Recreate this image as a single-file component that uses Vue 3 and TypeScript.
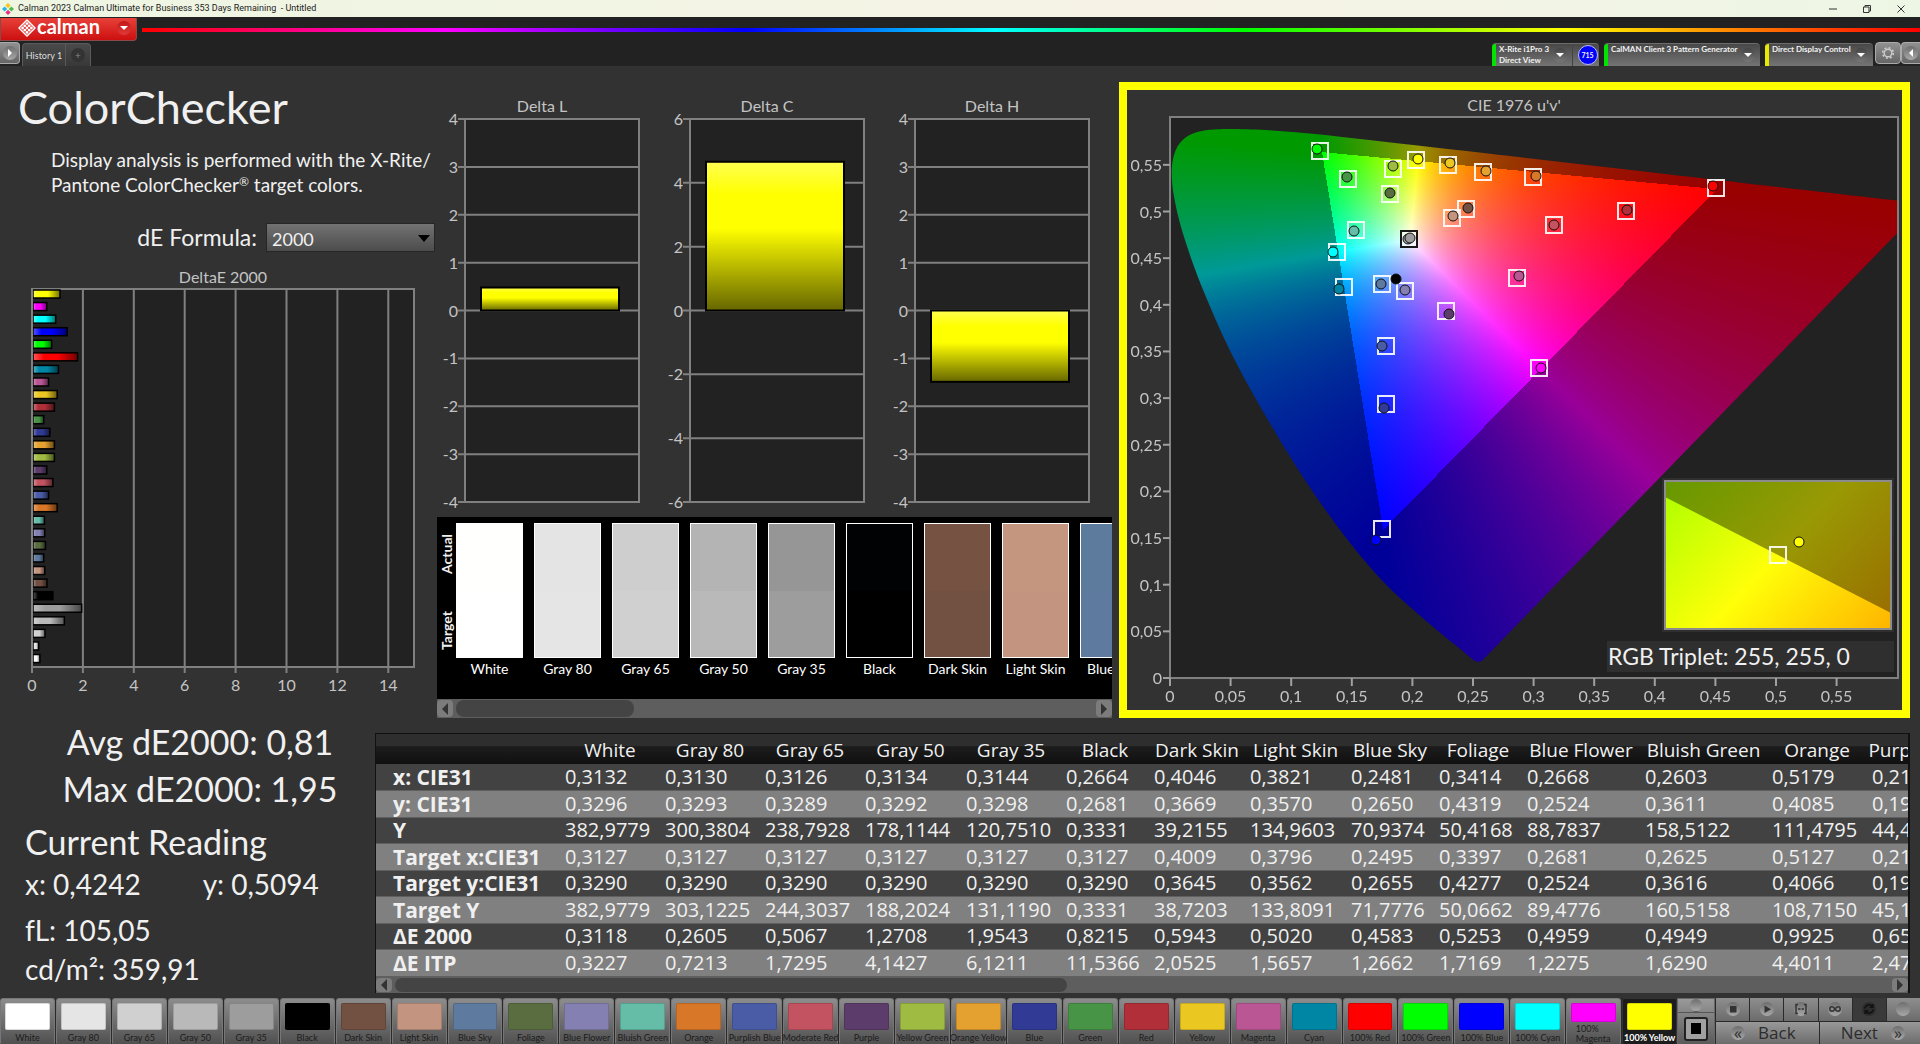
<script setup lang="ts">
import { onMounted, ref } from 'vue'

interface Patch { name: string; color: string; actual?: string; de: number }

const patches: Patch[] = [
  { name: 'White', color: '#ffffff', actual: '#fffffe', de: 0.31 },
  { name: 'Gray 80', color: '#e5e5e5', actual: '#e4e4e4', de: 0.26 },
  { name: 'Gray 65', color: '#d0d0d0', actual: '#cecece', de: 0.51 },
  { name: 'Gray 50', color: '#b9b9b9', actual: '#b4b4b4', de: 1.27 },
  { name: 'Gray 35', color: '#9d9d9d', actual: '#969696', de: 1.95 },
  { name: 'Black', color: '#000000', actual: '#010204', de: 0.82 },
  { name: 'Dark Skin', color: '#735142', actual: '#755241', de: 0.59 },
  { name: 'Light Skin', color: '#c39581', actual: '#c4957f', de: 0.5 },
  { name: 'Blue Sky', color: '#5e7b9f', actual: '#5d7b9d', de: 0.46 },
  { name: 'Foliage', color: '#5a6d41', de: 0.53 },
  { name: 'Blue Flower', color: '#8481b2', de: 0.5 },
  { name: 'Bluish Green', color: '#65bda8', de: 0.49 },
  { name: 'Orange', color: '#d97728', de: 0.99 },
  { name: 'Purplish Blue', color: '#4a5ca6', de: 0.65 },
  { name: 'Moderate Red', color: '#c35360', de: 0.82 },
  { name: 'Purple', color: '#5c3c6b', de: 0.58 },
  { name: 'Yellow Green', color: '#9fbb42', de: 0.88 },
  { name: 'Orange Yellow', color: '#e5a130', de: 0.88 },
  { name: 'Blue', color: '#313b95', de: 0.7 },
  { name: 'Green', color: '#489447', de: 0.46 },
  { name: 'Red', color: '#b02f38', de: 0.88 },
  { name: 'Yellow', color: '#ebc722', de: 0.99 },
  { name: 'Magenta', color: '#bb5695', de: 0.65 },
  { name: 'Cyan', color: '#0086a5', de: 1.04 },
  { name: '100% Red', color: '#ff0000', de: 1.79 },
  { name: '100% Green', color: '#00ff00', de: 0.77 },
  { name: '100% Blue', color: '#0000ff', de: 1.38 },
  { name: '100% Cyan', color: '#00ffff', de: 0.93 },
  { name: '100% Magenta', color: '#ff00ff', de: 0.58 },
  { name: '100% Yellow', color: '#ffff00', de: 1.1 },
]
const selected = '100% Yellow'
const deBars = [...patches].reverse()
const comparison = patches.slice(0, 9)

const deUnit = 25.45
const deTicks = [0, 2, 4, 6, 8, 10, 12, 14]

interface DeltaChart { title: string; max: number; step: number; value: number }
const deltas: DeltaChart[] = [
  { title: 'Delta L', max: 4, step: 1, value: 0.48 },
  { title: 'Delta C', max: 6, step: 2, value: 4.66 },
  { title: 'Delta H', max: 4, step: 1, value: -1.49 },
]
function ticksOf(c: DeltaChart): number[] {
  const out: number[] = []
  for (let v = c.max; v >= -c.max; v -= c.step) out.push(v)
  return out
}
const deltaY = (c: DeltaChart, v: number) => 25 + ((c.max - v) / (2 * c.max)) * 383

// CIE plot, in plot-area pixels
const plotW = 728
const plotH = 561
const uTicks = ['0', '0,05', '0,1', '0,15', '0,2', '0,25', '0,3', '0,35', '0,4', '0,45', '0,5', '0,55']
interface Marker { t?: [number, number]; c: [number, number]; color: string }
const markers: Marker[] = [
  { t: [150, 34], c: [147, 32], color: '#00ff00' },
  { t: [178, 62], c: [177, 60], color: '#489447' },
  { t: [223, 52], c: [223, 49], color: '#9fbb42' },
  { t: [246, 43], c: [248, 42], color: '#ffff00' },
  { t: [278, 48], c: [280, 46], color: '#ebc722' },
  { t: [313, 55], c: [316, 54], color: '#e5a130' },
  { t: [363, 60], c: [366, 59], color: '#d97728' },
  { t: [220, 77], c: [220, 76], color: '#5a6d41' },
  { t: [296, 92], c: [298, 91], color: '#735142' },
  { t: [282, 101], c: [283, 99], color: '#c39581' },
  { t: [186, 113], c: [184, 114], color: '#65bda8' },
  { t: [167, 135], c: [163, 135], color: '#00ffff' },
  { t: [174, 170], c: [169, 172], color: '#0086a5' },
  { t: [212, 167], c: [211, 167], color: '#5e7b9f' },
  { t: [235, 174], c: [235, 173], color: '#8481b2' },
  { c: [226, 162], color: '#000000' },
  { t: [276, 194], c: [279, 197], color: '#5c3c6b' },
  { t: [216, 229], c: [212, 229], color: '#4a5ca6' },
  { t: [369, 251], c: [371, 251], color: '#ff00ff' },
  { t: [347, 161], c: [349, 159], color: '#bb5695' },
  { t: [384, 108], c: [384, 108], color: '#c35360' },
  { t: [456, 94], c: [457, 93], color: '#b02f38' },
  { t: [546, 71], c: [543, 69], color: '#ff0000' },
  { t: [216, 287], c: [214, 291], color: '#313b95' },
  { t: [212, 412], c: [206, 423], color: '#0000ff' },
]

// spectral locus, CIE 1931 xy
const locus: [number, number][] = [
  [0.1741, 0.005], [0.1714, 0.0051], [0.1689, 0.0069], [0.1644, 0.0109], [0.1566, 0.0177],
  [0.144, 0.0297], [0.1355, 0.0399], [0.1241, 0.0578], [0.1096, 0.0868], [0.0913, 0.1327],
  [0.0687, 0.2007], [0.0454, 0.295], [0.0235, 0.4127], [0.0082, 0.5384], [0.0039, 0.6548],
  [0.0139, 0.7502], [0.0389, 0.812], [0.0743, 0.8338], [0.1142, 0.8262], [0.1547, 0.8059],
  [0.2296, 0.7543], [0.3016, 0.6923], [0.3731, 0.6245], [0.4441, 0.5547], [0.5125, 0.4866],
  [0.5752, 0.4242], [0.627, 0.3725], [0.6658, 0.334], [0.6915, 0.3083], [0.719, 0.2809],
  [0.7347, 0.2653],
]
const toPlot = ([x, y]: [number, number]): [number, number] => {
  const d = -2 * x + 12 * y + 3
  return [((4 * x) / d) * 1212, 560 - ((9 * y) / d) * 934]
}

const gamut = ref<HTMLCanvasElement | null>(null)
onMounted(() => {
  const target = gamut.value
  const ctx = target?.getContext('2d')
  if (!target || !ctx) return
  const buffer = document.createElement('canvas')
  buffer.width = plotW
  buffer.height = plotH
  const bctx = buffer.getContext('2d')
  if (!bctx) return
  const img = bctx.createImageData(plotW, plotH)
  for (let py = 0; py < plotH; py++) {
    for (let px = 0; px < plotW; px++) {
      const u = px / 1212
      const v = Math.max((560 - py) / 934, 0.001)
      const X = (9 * u) / (4 * v)
      const Z = (12 - 3 * u - 20 * v) / (4 * v)
      const rgb = [
        3.2406 * X - 1.5372 - 0.4986 * Z,
        -0.9689 * X + 1.8758 + 0.0415 * Z,
        0.0557 * X - 0.204 + 1.057 * Z,
      ]
      // full brightness inside the RGB triangle, dimmed outside it
      const k = Math.min(...rgb) >= 0 ? 255 : 153
      const top = Math.max(...rgb)
      const i = (py * plotW + px) * 4
      for (let n = 0; n < 3; n++) img.data[i + n] = (k * Math.max(rgb[n], 0)) / top
      img.data[i + 3] = 255
    }
  }
  bctx.putImageData(img, 0, 0)
  const pts = locus.map(toPlot)
  const at = (n: number) => pts[Math.min(Math.max(n, 0), pts.length - 1)]
  ctx.beginPath()
  ctx.moveTo(pts[0][0], pts[0][1])
  for (let n = 0; n < pts.length - 1; n++) {
    const [a, b, c, d] = [at(n - 1), at(n), at(n + 1), at(n + 2)]
    ctx.bezierCurveTo(
      b[0] + (c[0] - a[0]) / 6, b[1] + (c[1] - a[1]) / 6,
      c[0] - (d[0] - b[0]) / 6, c[1] - (d[1] - b[1]) / 6,
      c[0], c[1],
    )
  }
  ctx.closePath()
  ctx.clip()
  ctx.drawImage(buffer, 0, 0)
})

const columns = [
  { name: 'White', w: 100 }, { name: 'Gray 80', w: 100 }, { name: 'Gray 65', w: 100 },
  { name: 'Gray 50', w: 101 }, { name: 'Gray 35', w: 100 }, { name: 'Black', w: 88 },
  { name: 'Dark Skin', w: 96 }, { name: 'Light Skin', w: 101 }, { name: 'Blue Sky', w: 88 },
  { name: 'Foliage', w: 88 }, { name: 'Blue Flower', w: 118 }, { name: 'Bluish Green', w: 127 },
  { name: 'Orange', w: 100 }, { name: 'Purplish Blue', w: 120 },
]
const rows = [
  { label: 'x: CIE31', cells: '0,3132 0,3130 0,3126 0,3134 0,3144 0,2664 0,4046 0,3821 0,2481 0,3414 0,2668 0,2603 0,5179 0,21' },
  { label: 'y: CIE31', cells: '0,3296 0,3293 0,3289 0,3292 0,3298 0,2681 0,3669 0,3570 0,2650 0,4319 0,2524 0,3611 0,4085 0,19' },
  { label: 'Y', cells: '382,9779 300,3804 238,7928 178,1144 120,7510 0,3331 39,2155 134,9603 70,9374 50,4168 88,7837 158,5122 111,4795 44,4' },
  { label: 'Target x:CIE31', cells: '0,3127 0,3127 0,3127 0,3127 0,3127 0,3127 0,4009 0,3796 0,2495 0,3397 0,2681 0,2625 0,5127 0,21' },
  { label: 'Target y:CIE31', cells: '0,3290 0,3290 0,3290 0,3290 0,3290 0,3290 0,3645 0,3562 0,2655 0,4277 0,2524 0,3616 0,4066 0,19' },
  { label: 'Target Y', cells: '382,9779 303,1225 244,3037 188,2024 131,1190 0,3331 38,7203 133,8091 71,7776 50,0662 89,4776 160,5158 108,7150 45,1' },
  { label: 'ΔE 2000', cells: '0,3118 0,2605 0,5067 1,2708 1,9543 0,8215 0,5943 0,5020 0,4583 0,5253 0,4959 0,4949 0,9925 0,65' },
  { label: 'ΔE ITP', cells: '0,3227 0,7213 1,7295 4,1427 6,1211 11,5366 2,0525 1,5657 1,2662 1,7169 1,2275 1,6290 4,4011 2,47' },
].map(r => ({ label: r.label, cells: r.cells.split(' ') }))

const devices = [
  { lines: ['X-Rite i1Pro 3', 'Direct View'], color: '#00e400', badge: '715', cls: 'meter' },
  { lines: ['CalMAN Client 3 Pattern Generator'], color: '#00e400', badge: '', cls: 'source' },
  { lines: ['Direct Display Control'], color: '#e8e800', badge: '', cls: 'display' },
]
const transport = ['stop', 'play', 'series', 'loop', 'refresh', 'blank']
const formula = ref('2000')
</script>

<template>
  <div class="app">
    <header class="titlebar">
      <svg class="appicon" viewBox="0 0 12 12" aria-hidden="true">
        <path d="M6 0l2.6 2.6L6 5.200 3.400 2.600z" fill="#f7c520" />
        <path d="M2.600 3.400L5.200 6 2.600 8.600 0 6z" fill="#22b5e8" />
        <path d="M9.400 3.400L12 6 9.400 8.600 6.800 6z" fill="#54b948" />
        <path d="M6 6.800l2.600 2.600L6 12 3.400 9.400z" fill="#e8308a" />
      </svg>
      <span class="apptitle">Calman 2023 Calman Ultimate for Business 353 Days Remaining&nbsp; - Untitled</span>
      <div class="winbuttons">
        <button aria-label="Minimize"><svg viewBox="0 0 10 10"><path d="M1 5h8" /></svg></button>
        <button aria-label="Restore"><svg viewBox="0 0 10 10"><path d="M1.500 3h5.500v5.500H1.500zM3 3V1.500h5.500V7H7" /></svg></button>
        <button aria-label="Close"><svg viewBox="0 0 10 10"><path d="M1.500 1.500l7 7M8.500 1.500l-7 7" /></svg></button>
      </div>
    </header>

    <div class="brandrow">
      <button class="brand">
        <svg class="brandmark" viewBox="0 0 18 18" aria-hidden="true">
          <path d="M9 1L17 9 9 17 1 9z" fill="none" stroke="#fff" stroke-width="1.500" stroke-linejoin="round" />
          <g fill="#fff">
            <circle cx="9" cy="4.600" r="1.400" /><circle cx="6.800" cy="6.800" r="1.400" /><circle cx="11.200" cy="6.800" r="1.400" />
            <circle cx="4.600" cy="9" r="1.400" /><circle cx="9" cy="9" r="1.400" /><circle cx="13.400" cy="9" r="1.400" />
            <circle cx="6.800" cy="11.200" r="1.400" /><circle cx="11.200" cy="11.200" r="1.400" /><circle cx="9" cy="13.400" r="1.400" />
          </g>
        </svg>
        <span>calman</span>
        <i class="knob red"><i class="caret"></i></i>
      </button>
      <div class="spectrum"></div>
    </div>

    <nav class="tabs">
      <button class="edge left" aria-label="Expand"><i class="knob light"><i class="tri right"></i></i></button>
      <button class="tab">History 1</button>
      <button class="tab plus" aria-label="Add tab"><i class="knob dim">+</i></button>
      <div class="spacer"></div>
      <div v-for="d in devices" :key="d.cls" class="device" :class="d.cls">
        <i class="stripe" :style="{ background: d.color }"></i>
        <button class="devname"><span v-for="l in d.lines" :key="l">{{ l }}</span></button>
        <i class="knob"><i class="caret"></i></i>
        <span v-if="d.badge" class="badge"><b>{{ d.badge }}</b></span>
      </div>
      <button class="edge gear" aria-label="Settings">
        <svg viewBox="0 0 14 14"><circle cx="7" cy="7" r="3.800" stroke-width="1.400" /><circle cx="7" cy="7" r="5.300" stroke-width="1.600" stroke-dasharray="2 2.160" /></svg>
      </button>
      <button class="edge back" aria-label="Collapse"><i class="knob light"><i class="tri left"></i></i></button>
    </nav>

    <main>
      <div class="upper">
        <section class="intro">
          <h1>ColorChecker</h1>
          <p>Display analysis is performed with the X-Rite/<br />Pantone ColorChecker<span class="mark">®</span> target colors.</p>
          <div class="formula">
            <label for="formula">dE Formula:</label>
            <div class="selectbox">
              <select id="formula" v-model="formula"><option>2000</option></select>
            </div>
          </div>
          <svg class="chart" viewBox="0 0 437 437" role="img" aria-label="DeltaE 2000">
            <defs>
              <linearGradient id="shadeX" x1="0" x2="1" y1="0" y2="0">
                <stop offset="0" stop-color="#fff" stop-opacity=".35" /><stop offset=".25" stop-color="#fff" stop-opacity="0" />
                <stop offset=".55" stop-color="#000" stop-opacity="0" /><stop offset="1" stop-color="#000" stop-opacity=".55" />
              </linearGradient>
            </defs>
            <text x="223" y="23" text-anchor="middle">DeltaE 2000</text>
            <rect x="32" y="29" width="382" height="378" class="plot" />
            <g v-for="t in deTicks" :key="t">
              <path :d="`M${32 + t * deUnit} 29V413`" class="grid" />
              <text :x="32 + t * deUnit" y="431" text-anchor="middle">{{ t }}</text>
            </g>
            <g v-for="(b, i) in deBars" :key="b.name">
              <rect x="33" :y="30 + i * 12.57" :width="b.de * deUnit - 1" height="8" :fill="b.color" />
              <rect x="33" :y="30 + i * 12.57" :width="b.de * deUnit - 1" height="8" fill="url(#shadeX)" stroke="#000" stroke-width="1.500" />
            </g>
            <path d="M32 29V407" class="grid" />
          </svg>
        </section>

        <section class="middle">
          <div class="deltas">
            <svg v-for="c in deltas" :key="c.title" class="chart" viewBox="0 0 225 417" role="img" :aria-label="c.title">
              <defs>
                <linearGradient id="shadeY" x1="0" x2="0" y1="0" y2="1">
                  <stop offset="0" stop-color="#ffff50" /><stop offset=".22" stop-color="#ffff00" />
                  <stop offset=".45" stop-color="#ffff00" /><stop offset="1" stop-color="#666600" />
                </linearGradient>
              </defs>
              <text x="105" y="18" text-anchor="middle">{{ c.title }}</text>
              <rect x="28" y="25" width="174" height="383" class="plot" />
              <g v-for="t in ticksOf(c)" :key="t">
                <path :d="`M21 ${deltaY(c, t)}H202`" class="grid" />
                <text x="21" :y="deltaY(c, t) + 6" text-anchor="end">{{ t }}</text>
              </g>
              <rect x="44" :y="deltaY(c, Math.max(c.value, 0))" width="138" :height="Math.abs(deltaY(c, c.value) - deltaY(c, 0))"
                fill="url(#shadeY)" stroke="#000" stroke-width="2" />
            </svg>
          </div>
          <div class="compare">
            <div class="axis"><span>Target</span><span>Actual</span></div>
            <figure v-for="p in comparison" :key="p.name">
              <div class="pair">
                <div :style="{ background: p.actual }"></div>
                <div :style="{ background: p.color }"></div>
              </div>
              <figcaption>{{ p.name }}</figcaption>
            </figure>
          </div>
          <div class="scroll">
            <button aria-label="Scroll left"><i class="tri left"></i></button>
            <div class="track"><div class="thumb short"></div></div>
            <button aria-label="Scroll right"><i class="tri right"></i></button>
          </div>
        </section>

        <section class="cie">
          <svg class="chart" viewBox="0 0 775 620" role="img" aria-label="CIE 1976 u'v'">
            <defs>
              <linearGradient id="insetHue" gradientUnits="userSpaceOnUse" x1="-97" y1="-90" x2="97" y2="90">
                <stop offset="0" stop-color="#aaff00" /><stop offset=".5" stop-color="#ffff08" /><stop offset="1" stop-color="#ffb400" />
              </linearGradient>
            </defs>
            <text x="387" y="21" text-anchor="middle">CIE 1976 u'v'</text>
            <rect x="43" y="27" :width="plotW" :height="plotH" class="plot" />
            <foreignObject x="43" y="27" :width="plotW" :height="plotH">
              <canvas ref="gamut" class="gamut" :width="plotW" :height="plotH"></canvas>
            </foreignObject>
            <rect x="43" y="27" :width="plotW" :height="plotH" class="frame" />
            <g v-for="(t, i) in uTicks" :key="t">
              <path :d="`M${43 + i * 60.6} 588v8`" class="tick" />
              <text :x="43 + i * 60.6" y="612" text-anchor="middle">{{ t }}</text>
              <path :d="`M36 ${588 - i * 46.65}h7`" class="tick" />
              <text x="35" :y="594 - i * 46.65" text-anchor="end">{{ t }}</text>
            </g>
            <g transform="translate(43 27)">
              <template v-for="(m, i) in markers" :key="i">
                <rect v-if="m.t" :x="m.t[0] - 8" :y="m.t[1] - 8" width="16" height="16" class="target" />
                <circle :cx="m.c[0]" :cy="m.c[1]" r="5" :fill="m.color" class="reading" />
              </template>
              <rect x="231" y="114" width="16" height="16" class="target white" />
              <rect x="233" y="116" width="12" height="12" class="target thin" />
              <circle cx="238" cy="122" r="5" fill="#9d9d9d" class="reading" />
              <circle cx="240" cy="121" r="5" fill="#9d9d9d" class="reading" />
            </g>
            <rect x="535" y="388" width="232" height="154" fill="#2f2f2f" />
            <g transform="translate(651 465)">
              <rect x="-113" y="-74" width="226" height="148" fill="url(#insetHue)" />
              <path d="M-113-74H113V58L-113-58z" fill="#000" opacity=".4" />
              <rect x="-113" y="-74" width="226" height="148" fill="none" stroke="#8c8c8c" stroke-width="2" />
              <rect x="-8" y="-8" width="16" height="16" class="target" />
              <circle cx="21" cy="-13" r="5" fill="#ffff00" class="reading" />
            </g>
            <rect x="480" y="551" width="287" height="31" fill="#2f2f2f" />
            <text x="481" y="575" class="triplet">RGB Triplet: 255, 255, 0</text>
          </svg>
        </section>
      </div>

      <div class="lower">
        <section class="readings">
          <div class="stat">Avg dE2000: 0,81</div>
          <div class="stat">Max dE2000: 1,95</div>
          <h2>Current Reading</h2>
          <div class="xy"><span>x: 0,4242</span><span>y: 0,5094</span></div>
          <div class="value">fL: 105,05</div>
          <div class="cd">cd/m²: 359,91</div>
        </section>
        <section class="data">
          <div class="tablewrap">
            <table>
              <colgroup><col class="labels" /><col v-for="c in columns" :key="c.name" :style="{ width: c.w + 'px' }" /></colgroup>
              <thead>
                <tr><td></td><th v-for="c in columns" :key="c.name" scope="col">{{ c.name }}</th></tr>
              </thead>
              <tbody>
                <tr v-for="r in rows" :key="r.label">
                  <th scope="row">{{ r.label }}</th>
                  <td v-for="(v, i) in r.cells" :key="i">{{ v }}</td>
                </tr>
              </tbody>
            </table>
          </div>
          <div class="scroll">
            <button aria-label="Scroll left"><i class="tri left"></i></button>
            <div class="track"><div class="thumb long"></div></div>
            <button aria-label="Scroll right"><i class="tri right"></i></button>
          </div>
        </section>
      </div>
    </main>

    <footer>
      <div class="patches">
        <button v-for="p in patches" :key="p.name" class="patch" :class="{ on: p.name === selected, two: p.name === '100% Magenta' }">
          <i :style="{ background: p.color }"></i><span>{{ p.name }}</span>
        </button>
      </div>
      <div class="pattern">
        <button class="up" aria-label="Show patterns"><i class="knob light"><i class="tri up"></i></i></button>
        <button class="window" aria-label="Pattern window"><i></i></button>
      </div>
      <div class="control">
        <div class="transport">
          <button v-for="t in transport" :key="t" :aria-label="t" :class="{ active: t === 'refresh' }">
            <i class="knob light">
              <svg viewBox="0 0 14 14">
                <path v-if="t === 'stop'" d="M4 4h6.500v6.500H4z" fill="#333" />
                <path v-else-if="t === 'play'" d="M4.500 3.500L11 7.200 4.500 11z" fill="#333" />
                <path v-else-if="t === 'series'" d="M4 2.500H2v9h2M10 2.500h2v9h-2M4 7h2M8 7h2M6.500 7h1" class="line" />
                <path v-else-if="t === 'loop'" d="M7 7C6 5.500 5 4.800 4 4.800a2.200 2.200 0 0 0 0 4.400C5 9.200 6 8.500 7 7s2-2.200 3-2.200a2.200 2.200 0 0 1 0 4.400C9 9.200 8 8.500 7 7z" class="line" />
                <path v-else-if="t === 'refresh'" d="M2.800 6.500A4.200 4.200 0 0 1 10.300 4.500M10.800 2v3.200H7.600M11.200 7.500A4.200 4.200 0 0 1 3.700 9.500M3.200 12V8.800h3.200" class="line dark" />
              </svg>
            </i>
          </button>
        </div>
        <div class="steps">
          <button class="prev"><i class="knob light">«</i>Back</button>
          <button class="next">Next<i class="knob light">»</i></button>
        </div>
      </div>
    </footer>
  </div>
</template>

<style>
body { margin: 0; background: #323232; }
</style>

<style scoped>
* { box-sizing: border-box; }
.app {
  min-height: 100vh; display: flex; flex-direction: column; overflow: hidden;
  background: #323232; color: #f0f0f0; font-family: Lato, "Open Sans", sans-serif;
}
button { border: 0; padding: 0; margin: 0; background: none; font: inherit; color: inherit; }
i { font-style: normal; }

.titlebar {
  height: 17px; display: flex; align-items: center; gap: 4px; padding-left: 2px;
  background: linear-gradient(90deg, #eef6e2, #f6f3e6 60%, #f2f4e6 80%, #edf6e4); color: #222;
}
.appicon { width: 12px; height: 12px; }
.apptitle { font: 9px/17px Roboto, sans-serif; white-space: nowrap; }
.winbuttons { margin-left: auto; display: flex; gap: 24px; padding-right: 14px; }
.winbuttons button { width: 10px; height: 17px; display: flex; align-items: center; }
.winbuttons svg { width: 10px; height: 10px; fill: none; stroke: #333; stroke-width: 1; }

.brandrow { height: 25px; background: #222; display: flex; align-items: center; gap: 5px; }
.brand {
  width: 137px; height: 23px; display: flex; align-items: center; padding: 0 5px 3px 17px;
  background: linear-gradient(#e8413a, #cc1010); border: 1px solid #8a4a48; border-top: 0; border-radius: 0 0 4px 0;
  color: #fff; font-size: 20px; line-height: 20px; font-weight: 700;
}
.brand span { line-height: 18px; padding-bottom: 3px; margin-left: 1px; }
.brandmark { width: 18px; height: 18px; }
.brand .knob { margin-left: auto; }
.spectrum {
  flex: 1; height: 4px;
  background: linear-gradient(90deg, #f00, #f0f 17%, #00f 34%, #0ff 48%, #0f0 62%, #ff0 80%, #f00);
}

.knob {
  display: inline-flex; align-items: center; justify-content: center; flex: none;
  width: 14px; height: 14px; border-radius: 50%; background: linear-gradient(#444, #777);
}
.knob.red { background: linear-gradient(#c01818, #e03a38); }
.knob.light { background: linear-gradient(#6e6e6e, #a8a8a8); }
.knob.dim { background: #333; color: #888; font-size: 10px; line-height: 14px; }
.caret { border: 4px solid transparent; border-top-color: #fff; border-bottom: 0; }
.tri { border: 4px solid transparent; }
.tri.right { border-left-color: #fff; border-right: 0; }
.tri.left { border-right-color: #fff; border-left: 0; }
.tri.up { border-bottom-color: #333; border-top: 0; }

.tabs { height: 24px; background: #222; display: flex; align-items: flex-end; font-size: 9px; line-height: 11px; color: #ddd; }
.edge {
  height: 22px; margin-bottom: 2px; display: flex; align-items: center; justify-content: center;
  background: linear-gradient(#909090, #666); border: 1px solid #aaa; border-radius: 4px;
}
.edge.left { width: 20px; border-left: 0; border-radius: 0 4px 4px 0; margin-right: 2px; }
.edge.gear { width: 26px; margin-left: 2px; }
.edge.gear svg { width: 14px; height: 14px; fill: none; stroke: #ccc; }
.edge.back { width: 19px; border-right: 0; border-radius: 4px 0 0 4px; }
.tab {
  height: 23px; width: 44px; background: linear-gradient(#4a4a4a, #383838);
  border: 1px solid #5a5a5a; border-bottom: 0; border-radius: 4px 0 0 0;
}
.tab.plus { width: 25px; border-left: 0; border-radius: 0 4px 0 0; }
.spacer { flex: 1; }
.device {
  height: 23px; display: flex; align-items: center; overflow: hidden; margin-right: 5px; color: #f2f2f2;
  background: linear-gradient(#484848, #747474); border-top: 1px solid #6c6c6c; border-radius: 4px 4px 0 0;
}
.meter { width: 107px; }
.source { width: 156px; }
.display { width: 108px; margin-right: 0; }
.stripe { width: 4px; align-self: stretch; }
.devname { flex: 1; height: 22px; display: flex; flex-direction: column; text-align: left; padding-left: 3px; font-size: 8px; line-height: 11px; font-weight: 700; white-space: nowrap; }
.device .knob { margin-right: 5px; }
.badge { width: 27px; height: 21px; display: flex; align-items: center; justify-content: center; padding-left: 3px; border-left: 1px solid #444; }
.badge b {
  width: 20px; height: 20px; border-radius: 50%; background: #00f; border: 1px solid #bbf;
  font-size: 7px; line-height: 18px; text-align: center;
}

main { flex: 1; }
.upper { display: grid; grid-template-columns: minmax(0, 437fr) minmax(0, 675fr) minmax(0, 808fr); }
.chart { display: block; width: 100%; height: auto; font-size: 16px; }
.chart text { fill: #c4c4c4; }
.chart .triplet { font-size: 23px; fill: #f0f0f0; }
.plot { fill: #222; stroke: #808080; stroke-width: 2; }
.frame { fill: none; stroke: #808080; stroke-width: 2; }
.grid { stroke: #808080; stroke-width: 2; fill: none; }
.tick { stroke: #a0a0a0; stroke-width: 2; }
.target { fill: none; stroke: #fff; stroke-width: 2; stroke-opacity: .9; }
.target.white { stroke: #000; }
.target.thin { stroke-width: 1; }
.reading { stroke: #111; stroke-width: 1; }
.gamut { display: block; width: 100%; height: 100%; }

h1 { margin: 14px 0 0 18px; font-size: 45px; line-height: 54px; font-weight: 400; }
p { margin: 13px 0 0 51px; font-size: 19px; line-height: 25px; white-space: nowrap; }
.mark { font-size: 12px; line-height: 0; vertical-align: 6px; }
.formula { margin: 26px 2px 8px 0; display: flex; justify-content: flex-end; align-items: center; gap: 9px; font-size: 23px; line-height: 29px; }
.selectbox { position: relative; width: 169px; }
.selectbox::after {
  content: ""; position: absolute; right: 5px; top: 12px; pointer-events: none;
  border: 6px solid transparent; border-top: 7px solid #000; border-bottom: 0;
}
select {
  appearance: none; display: block; width: 100%; height: 29px; padding: 3px 5px 0; border: 1px solid #262626; border-radius: 0;
  background: linear-gradient(#727272, #4c4c4c); color: #f0f0f0; font: 18px/24px Lato, sans-serif;
}

.middle { padding-top: 28px; }
.deltas { display: flex; }
.deltas svg { flex: 1; width: 0; }
.compare { margin-top: 6px; height: 182px; background: #000; display: flex; gap: 11px; overflow: hidden; }
.axis {
  flex: none; width: 19px; height: 141px; margin-right: -11px; display: flex; justify-content: space-between; align-items: center;
  writing-mode: vertical-rl; transform: rotate(180deg); padding: 8px 0 17px; font-size: 14px; line-height: 19px; font-weight: 700;
}
figure { flex: none; margin: 6px 0 0; width: 67px; }
.pair { height: 135px; display: flex; flex-direction: column; border: 1px solid #fff; }
.pair div { flex: 1; }
figcaption { margin: 0 -6px; font-size: 14px; line-height: 21px; text-align: center; white-space: nowrap; color: #fff; }
.scroll { height: 19px; display: flex; padding: 1px 0; gap: 3px; background: #5e5e5e; }
.scroll button { width: 16px; flex: none; display: flex; align-items: center; justify-content: center; background: #7c7c7c; border-radius: 4px; }
.scroll .tri { border-width: 6px; }
.scroll .tri.left { border-right-color: #333; border-left: 0; }
.scroll .tri.right { border-left-color: #333; border-right: 0; }
.track { flex: 1; display: flex; }
.thumb { background: #444; border-radius: 8px; }
.thumb.short { width: 28%; }
.thumb.long { width: 45%; }

.cie { margin: 16px 10px 0 7px; border: 8px solid #ffff00; align-self: start; }

.lower { display: grid; grid-template-columns: minmax(0, 375fr) minmax(0, 1545fr); }
.readings { padding-left: 25px; }
.stat { margin-left: -25px; padding-left: 25px; text-align: center; font-size: 34px; line-height: 47px; white-space: nowrap; }
h2 { margin: 6px 0 0; font-size: 34px; line-height: 47px; font-weight: 400; }
.xy, .value, .cd { font-size: 28px; line-height: 39px; white-space: nowrap; }
.xy { display: flex; gap: 62px; margin-bottom: 7px; }
.data { margin: 15px 10px 5px 0; border: 1px solid #111; border-width: 1px 2px 0 1px; background: #5e5e5e; min-width: 0; }
.tablewrap { overflow: hidden; }
table { width: 1611px; table-layout: fixed; border-collapse: collapse; font-family: "Open Sans", sans-serif; }
col.labels { width: 184px; }
th, td { padding: 0 0 0 5px; text-align: left; white-space: nowrap; font-size: 20px; line-height: 24px; }
thead tr { height: 30px; background: linear-gradient(#2e2e2e 40%, #1c1c1c 42%, #101010); }
thead th { padding: 2px 0 0; font-size: 19px; font-weight: 400; text-align: center; }
tbody th { padding-left: 17px; font-size: 21px; font-weight: 700; }
tbody tr { height: 26px; background: #424242; border-bottom: 1px solid #606060; }
tbody tr:nth-child(even) { height: 27px; background: #808080; }
.data .scroll { height: 16px; }

footer { height: 47px; display: flex; background: #2a2a2a; }
.patches { flex: 1678; display: flex; min-width: 0; gap: 1px; }
.patch {
  flex: 1 1 0; min-width: 0; height: 47px; display: flex; flex-direction: column; align-items: center; padding: 4px 4px 0;
  background: linear-gradient(#8c8c8c, #505050); border: 1px solid #777; border-bottom-color: #444; border-radius: 3px;
  color: #1c1c1c; font-size: 9px; line-height: 10px;
}
.patch i { width: 100%; height: 27px; border-radius: 2px; box-shadow: inset 0 0 0 1px rgba(0, 0, 0, .15); }
.patch span { margin: 3px -4px 0; white-space: nowrap; }
.patch.two i { height: 19px; }
.patch.two span { white-space: normal; width: 36px; margin-top: 2px; text-align: left; }
.patch.on { background: #1c1c1c; border-color: #333; color: #fff; font-weight: 700; }
.pattern { flex: 36; display: flex; flex-direction: column; background: linear-gradient(#999, #5a5a5a); border: 1px solid #666; margin-right: 1px; }
.pattern .up { height: 14px; display: flex; align-items: center; justify-content: center; border-bottom: 1px solid #555; }
.up .knob { width: 12px; height: 12px; }
.window { width: 24px; height: 24px; margin: 4px auto 0; background: #a0a0a0; border: 2px solid #222; border-radius: 3px; display: flex; align-items: center; justify-content: center; }
.window i { width: 10px; height: 11px; background: #000; }
.control { flex: 204; display: flex; flex-direction: column; gap: 1px; color: #2c2c2c; }
.transport { display: flex; gap: 1px; height: 23px; }
.transport button { flex: 1; background: linear-gradient(#8e8e8e, #6c6c6c); display: flex; align-items: center; justify-content: center; }
.transport .active { background: #3a3a3a; }
.transport .active .knob { background: #2c2c2c; }
.transport svg { width: 14px; height: 14px; }
.line { fill: none; stroke: #333; stroke-width: 1.500; }
.line.dark { stroke: #111; }
.steps { display: flex; gap: 1px; height: 23px; font-family: "Open Sans", sans-serif; font-size: 17px; line-height: 22px; }
.steps button { flex: 1; display: flex; align-items: center; justify-content: center; gap: 13px; background: linear-gradient(#999, #6a6a6a); }
.steps .prev { padding-right: 8px; }
.steps .next { padding-left: 6px; }
.steps .knob { font-size: 16px; line-height: 12px; }
</style>
